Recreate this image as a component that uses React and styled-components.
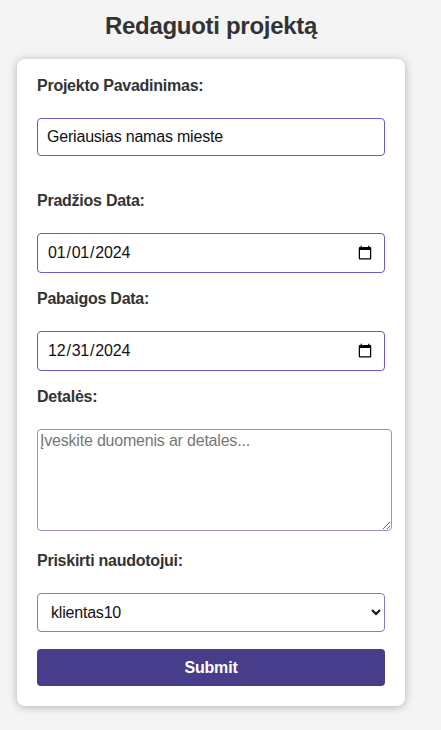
import React from 'react';
import styled, { createGlobalStyle } from 'styled-components';

const GlobalStyle = createGlobalStyle`
  body {
    margin: 0;
    background: #f4f4f4;
    font-family: 'Liberation Sans', Arial, sans-serif;
    letter-spacing: -0.25px;
    color: #333;
  }
`;

const Page = styled.div`
  width: 422px;
  padding-top: 12px;
  padding-bottom: 24px;
`;

const Title = styled.h2`
  margin: 0 0 19px;
  font-size: 24px;
  line-height: 28px;
  font-weight: bold;
  text-align: center;
  letter-spacing: -0.3px;
  color: #333;
`;

const Card = styled.form`
  width: 388px;
  box-sizing: border-box;
  margin: 0 auto;
  padding: 18px 20px 20px;
  background: #fff;
  border-radius: 8px;
  box-shadow: 0 1px 8px rgba(0, 0, 0, 0.28);
`;

const Label = styled.label`
  display: block;
  font-size: 16px;
  line-height: 18px;
  font-weight: bold;
  color: #333;
  margin-bottom: 23px;
`;

const Field = styled.input`
  display: block;
  box-sizing: border-box;
  width: 348px;
  height: ${(p) => p.$h || 38}px;
  margin: 0 0 ${(p) => p.$gap || 17}px;
  padding: 0 9px;
  font: inherit;
  font-size: 16px;
  letter-spacing: -0.2px;
  color: #111;
  background: #fff;
  border: 1px solid #6a5acd;
  border-radius: 4px;
  outline: none;
`;

const TextArea = styled.textarea`
  display: block;
  box-sizing: border-box;
  width: 355px;
  height: 102px;
  margin: 0 0 21px;
  padding: 2px;
  font: inherit;
  font-size: 16px;
  letter-spacing: -0.2px;
  border: 1px solid #9b92c9;
  border-radius: 4px;
  outline: none;

  &::placeholder {
    color: #777;
  }
`;

const Select = styled.select`
  display: block;
  box-sizing: border-box;
  width: 348px;
  height: 39px;
  margin: 0 0 17px;
  padding: 0 9px;
  font: inherit;
  font-size: 16px;
  letter-spacing: -0.2px;
  color: #111;
  background: #fff;
  border: 1px solid #8579c2;
  border-radius: 4px;
  outline: none;
`;

const SubmitButton = styled.button`
  display: block;
  width: 348px;
  height: 37px;
  border: none;
  border-radius: 4px;
  background: #483d8b;
  color: #fff;
  font: inherit;
  font-size: 16px;
  font-weight: bold;
  letter-spacing: -0.2px;
  cursor: pointer;
`;

export default function App() {
  return (
    <>
      <GlobalStyle />
      <Page>
        <Title>Redaguoti projektą</Title>
        <Card onSubmit={(e) => e.preventDefault()}>
          <Label htmlFor='name'>Projekto Pavadinimas:</Label>
          <Field id='name' type='text' defaultValue='Geriausias namas mieste' $gap={36} />

          <Label htmlFor='start'>Pradžios Data:</Label>
          <Field id='start' type='date' defaultValue='2024-01-01' $h={40} />

          <Label htmlFor='end'>Pabaigos Data:</Label>
          <Field id='end' type='date' defaultValue='2024-12-31' $h={40} />

          <Label htmlFor='details'>Detalės:</Label>
          <TextArea id='details' placeholder='Įveskite duomenis ar detales...' />

          <Label htmlFor='user'>Priskirti naudotojui:</Label>
          <Select id='user' defaultValue='klientas10'>
            <option value='klientas10'>klientas10</option>
            <option value='klientas11'>klientas11</option>
          </Select>

          <SubmitButton type='submit'>Submit</SubmitButton>
        </Card>
      </Page>
    </>
  );
}
